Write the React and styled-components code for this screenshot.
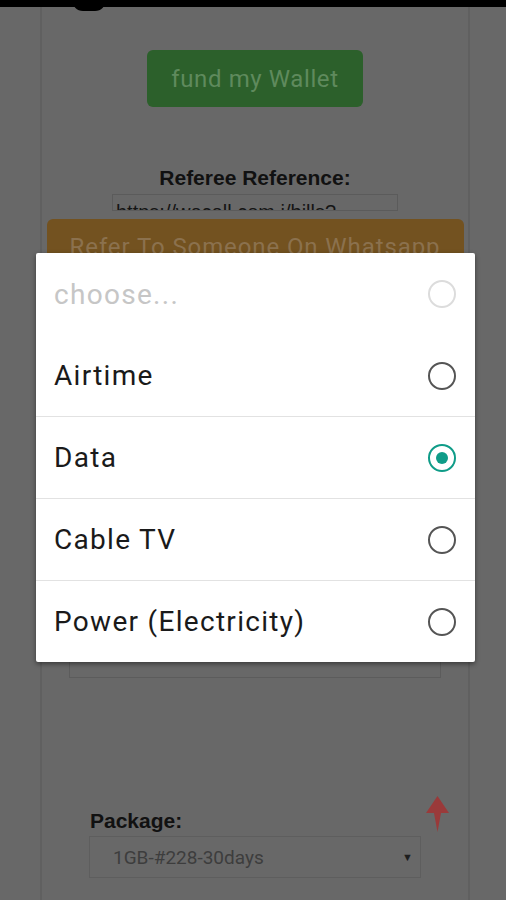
import React from 'react'
import styled, { createGlobalStyle } from 'styled-components'

const GlobalStyle = createGlobalStyle`
  html, body {
    margin: 0;
    padding: 0;
    background: #686868;
    font-family: Roboto, "Liberation Sans", Arial, sans-serif;
  }
`

const options = [
  { label: 'choose...', placeholder: true },
  { label: 'Airtime' },
  { label: 'Data', checked: true, divider: true },
  { label: 'Cable TV', divider: true },
  { label: 'Power (Electricity)', divider: true },
]

const StatusBar = styled.div`
  position: relative;
  height: 7px;
  background: #000;
  &::after {
    content: '';
    position: absolute;
    left: 72px;
    top: 0;
    width: 34px;
    height: 11px;
    border-radius: 0 0 17px 17px;
    background: #000;
  }
`

const Panel = styled.main`
  margin-left: 40px;
  width: 426px;
  min-height: 893px;
  border-left: 2px solid #606060;
  border-right: 2px solid #606060;
  display: flex;
  flex-direction: column;
  align-items: center;
`

const FundButton = styled.button`
  margin-top: 43px;
  width: 216px;
  height: 57px;
  border: none;
  border-radius: 6px;
  background: #2c602b;
  color: #5f8a5d;
  font-family: Roboto, sans-serif;
  font-size: 24px;
  letter-spacing: 0.6px;
`

const FieldLabel = styled.label`
  font-family: "Liberation Sans", Arial, sans-serif;
  font-weight: bold;
  font-size: 21px;
  line-height: 24px;
  color: #111;
  margin-top: ${(p) => p.$top}px;
  align-self: ${(p) => (p.$left ? 'flex-start' : 'center')};
  margin-left: ${(p) => p.$left || 0}px;
`

const RefInput = styled.div`
  margin-top: 4px;
  width: 286px;
  height: 17px;
  border: 1px solid #5b5b5b;
  overflow: hidden;
  padding: 6px 0 0 3px;
  box-sizing: border-box;
  font-family: "Liberation Sans", Arial, sans-serif;
  font-size: 20px;
  line-height: 22px;
  color: #151515;
  white-space: nowrap;
`

const ReferButton = styled.button`
  margin-top: 8px;
  width: 417px;
  height: 56px;
  border: none;
  border-radius: 6px;
  background: #735220;
  color: #8b714e;
  font-family: Roboto, sans-serif;
  font-size: 24px;
  letter-spacing: 0.9px;
`

const TextBox = styled.div`
  margin-top: 284px;
  width: 372px;
  height: 119px;
  border: 1px solid #5c5c5c;
  box-sizing: border-box;
`

const PackageBlock = styled.div`
  margin-top: 131px;
  width: 332px;
  display: flex;
  flex-direction: column;
`

const SelectBox = styled.div`
  margin-top: 3px;
  height: 42px;
  border: 1px solid #5e5e5e;
  box-sizing: border-box;
  display: flex;
  align-items: center;
  justify-content: space-between;
  padding: 0 7px 0 23px;
  font-family: Roboto, "Liberation Sans", sans-serif;
  font-size: 19px;
  color: #3d3d3d;
`

const Caret = styled.span`
  font-size: 11px;
  color: #1e1e1e;
`

const ScrollTop = styled.div`
  position: absolute;
  left: 426px;
  top: 796px;
  width: 23px;
  height: 36px;
`

const Dialog = styled.div`
  position: absolute;
  left: 36px;
  top: 253px;
  width: 439px;
  background: #fff;
  border-radius: 2px;
  box-shadow: 0 2px 5px rgba(0, 0, 0, 0.45);
  overflow: hidden;
`

const OptionRow = styled.div`
  height: 81px;
  display: flex;
  align-items: center;
  justify-content: space-between;
  padding: 0 19px 0 18px;
  border-top: ${(p) => (p.$divider ? '1px solid #e2e2e2' : 'none')};
  font-family: Roboto, sans-serif;
  font-size: 28px;
  letter-spacing: 1.3px;
  color: ${(p) => (p.$placeholder ? '#c6c6c6' : '#1a1a1a')};
  &:first-child {
    height: 82px;
  }
`

const Radio = styled.span`
  width: 24px;
  height: 24px;
  border-radius: 50%;
  border: 2.5px solid
    ${(p) => (p.$checked ? '#0f9c88' : p.$placeholder ? '#dcdcdc' : '#555')};
  display: flex;
  align-items: center;
  justify-content: center;
  &::after {
    content: '';
    width: 12px;
    height: 12px;
    border-radius: 50%;
    background: ${(p) => (p.$checked ? '#0f9c88' : 'transparent')};
  }
`

const App = () => {
  return (
    <>
      <GlobalStyle />
      <StatusBar />
      <Panel>
        <FundButton>fund my Wallet</FundButton>
        <FieldLabel $top={59}>Referee Reference:</FieldLabel>
        <RefInput>https://wecell.com.i/bills?</RefInput>
        <ReferButton>Refer To Someone On Whatsapp</ReferButton>
        <TextBox />
        <PackageBlock>
          <FieldLabel $top={0} $left={1}>Package:</FieldLabel>
          <SelectBox>
            <span>1GB-#228-30days</span>
            <Caret>▼</Caret>
          </SelectBox>
        </PackageBlock>
      </Panel>
      <ScrollTop>
        <svg width="23" height="36" viewBox="0 0 23 36">
          <path d="M11.5 0 L23 17 L15 17 L11.5 36 L8 17 L0 17 Z" fill="#9a3a3a" />
        </svg>
      </ScrollTop>
      <Dialog>
        {options.map((o) => (
          <OptionRow key={o.label} $divider={o.divider} $placeholder={o.placeholder}>
            <span>{o.label}</span>
            <Radio $checked={o.checked} $placeholder={o.placeholder} />
          </OptionRow>
        ))}
      </Dialog>
    </>
  )
}

export default App
